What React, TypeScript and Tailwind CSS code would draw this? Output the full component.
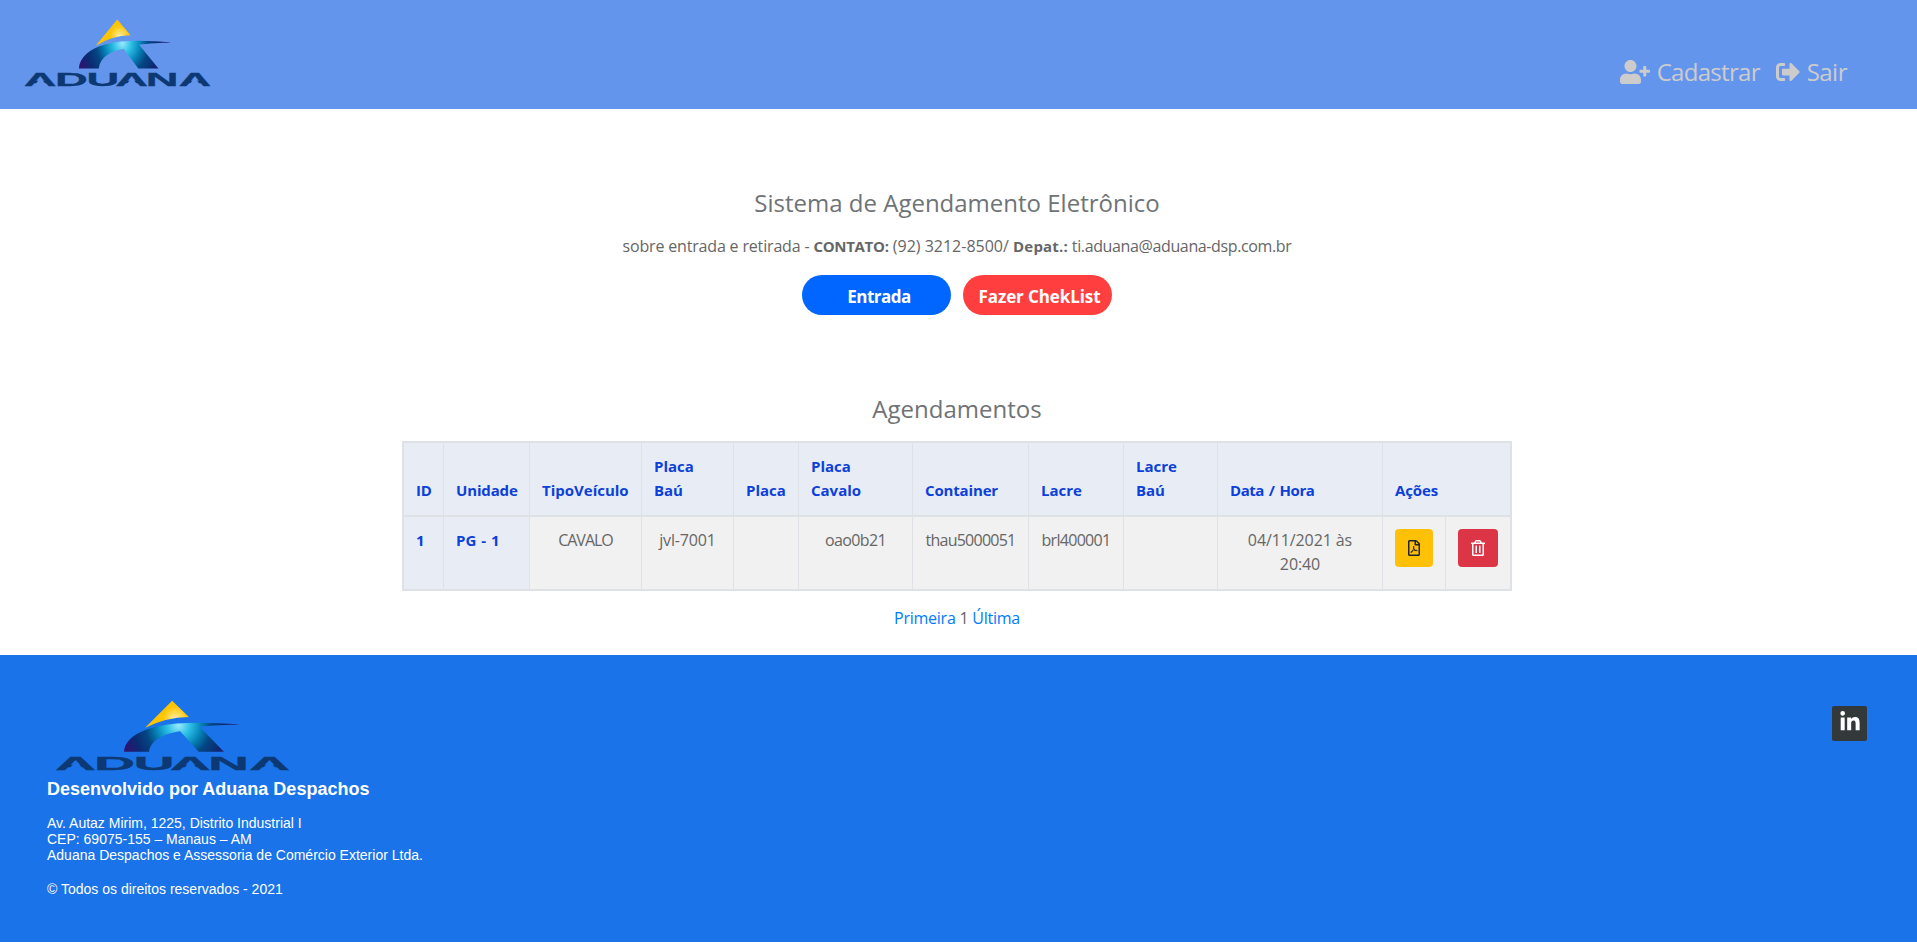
import type { ReactNode } from "react";
import { FaLinkedinIn, FaRegFilePdf, FaRegTrashAlt, FaSignOutAlt, FaUserPlus } from "react-icons/fa";

function Logo({ id, className, background }: { id: string; className: string; background: string }) {
  return (
    <svg
      className={`overflow-visible ${className}`}
      viewBox="162 177 710 220"
      preserveAspectRatio="none"
      role="img"
      aria-label="Aduana"
    >
      <defs>
        <radialGradient id={`${id}-sun`} gradientUnits="userSpaceOnUse" cx="525" cy="236" r="42">
          <stop offset="0" stopColor="#fff0b8" />
          <stop offset="0.4" stopColor="#ffdb58" />
          <stop offset="0.9" stopColor="#ffc400" />
        </radialGradient>
        <radialGradient id={`${id}-arch`} gradientUnits="userSpaceOnUse" cx="535" cy="256" r="170">
          <stop offset="0" stopColor="#9be8fb" />
          <stop offset="0.2" stopColor="#2cc0e6" />
          <stop offset="0.4" stopColor="#0683b8" />
          <stop offset="0.58" stopColor="#044683" />
          <stop offset="0.8" stopColor="#0b2a72" />
          <stop offset="1" stopColor="#2c1470" />
        </radialGradient>
      </defs>
      <path d="M516 182 L566 231 Q495 232 435 264 Z" fill={`url(#${id}-sun)`} />
      <path
        d="M372 336 C374 300 412 274 470 260 C540 244 630 248 719 254 C680 255 630 257 598 261 L671 336 L595 336 L540 274 C485 282 450 304 447 336 Z"
        fill={`url(#${id}-arch)`}
      />
      <text
        transform="scale(2.94 1)"
        x="56.2 96 136.1 173.1 212.1 253.8"
        y="391"
        fill="#0c3873"
        stroke="#0c3873"
        strokeWidth="0.8"
        className="font-['Liberation_Sans',Arial,sans-serif] text-[58px] font-bold"
      >
        ADUANA
      </text>
      <path d="M201 394 L228 364 L255 394 Z M544 394 L571 364 L598 394 Z M780 394 L807 364 L834 394 Z" fill={background} />
    </svg>
  );
}

function HeadCell({ children, className = "", span }: { children: ReactNode; className?: string; span?: number }) {
  return (
    <th
      colSpan={span}
      className={`h-[74px] border-b-2 border-[#dee2e6] bg-[#e8edf5] px-3 pb-[13px] text-left align-bottom text-[15px] font-bold text-[#0d3fdb] ${className}`}
    >
      {children}
    </th>
  );
}

function Cell({ children, className = "" }: { children?: ReactNode; className?: string }) {
  return <td className={`h-[72px] border-r border-[#dee2e6] bg-[#f1f1f1] pt-[11px] text-center align-top ${className}`}>{children}</td>;
}

export default function App() {
  return (
    <div className="flex min-h-[949px] flex-col bg-white font-['Open_Sans','Noto_Sans',sans-serif] text-base leading-6 text-[#666]">
      <header className="flex h-[109px] items-start justify-between bg-[#6495ed] pr-[70px] pl-[23px]">
        <Logo id="top" className="mt-[18px] h-[70px] w-[189px]" background="#6495ed" />
        <nav className="mt-[57px] flex text-2xl leading-[30px] text-[#ccc]">
          <a href="#" className="flex w-[156px] items-center gap-[7px]">
            <FaUserPlus className="h-6 w-[30px]" />
            <span className="font-[450] tracking-[-0.7px]">Cadastrar</span>
          </a>
          <a href="#" className="flex items-center gap-[7px]">
            <FaSignOutAlt className="size-6" />
            <span className="font-[450] tracking-[-0.5px]">Sair</span>
          </a>
        </nav>
      </header>

      <main className="flex flex-1 flex-col items-center pr-[3px]">
        <h1 className="mt-[79px] text-2xl leading-[30px] text-[#6f7376]">Sistema de Agendamento Eletrônico</h1>
        <p className="mt-4 whitespace-pre">
          <span className="tracking-[-0.17px]">sobre entrada e retirada - </span>
          <b className="text-[15px] font-bold tracking-[-0.3px]">CONTATO:</b>
          <span> (92) 3212-8500/ </span>
          <b className="text-[15px] font-bold tracking-[0.2px]">Depat.:</b>
          <span className="tracking-[-0.37px]"> ti.aduana@aduana-dsp.com.br</span>
        </p>
        <div className="mt-[17px] flex gap-3 text-[17px] font-bold text-white">
          <button className="h-10 w-[149px] rounded-full bg-[#0066ff] pt-1 pl-[5px] leading-9 tracking-[-0.5px]">Entrada</button>
          <button className="h-10 w-[149px] rounded-full bg-[#ff3f3f] pt-1 pl-[4px] leading-9 tracking-[-0.1px]">Fazer ChekList</button>
        </div>

        <h2 className="mt-[79px] text-2xl leading-[30px] text-[#6f7376]">Agendamentos</h2>
        <table className="mt-[17px] w-[1110px] table-fixed border-separate border-spacing-0 border-2 border-[#dee2e6]">
          <colgroup>
            <col className="w-[40px]" />
            <col className="w-[86px]" />
            <col className="w-[112px]" />
            <col className="w-[92px]" />
            <col className="w-[65px]" />
            <col className="w-[114px]" />
            <col className="w-[116px]" />
            <col className="w-[95px]" />
            <col className="w-[94px]" />
            <col className="w-[165px]" />
            <col className="w-[63px]" />
            <col className="w-[64px]" />
          </colgroup>
          <thead>
            <tr>
              <HeadCell className="border-r tracking-[-0.3px]">ID</HeadCell>
              <HeadCell className="border-r tracking-[-0.15px]">Unidade</HeadCell>
              <HeadCell className="border-r">TipoVeículo</HeadCell>
              <HeadCell className="border-r">Placa<br />Baú</HeadCell>
              <HeadCell className="border-r">Placa</HeadCell>
              <HeadCell className="border-r">Placa<br />Cavalo</HeadCell>
              <HeadCell className="border-r tracking-[-0.15px]">Container</HeadCell>
              <HeadCell className="border-r">Lacre</HeadCell>
              <HeadCell className="border-r">Lacre<br />Baú</HeadCell>
              <HeadCell className="border-r tracking-[-0.45px] [word-spacing:1.5px]">Data / Hora</HeadCell>
              <HeadCell span={2} className="tracking-[-0.1px]">Ações</HeadCell>
            </tr>
          </thead>
          <tbody>
            <tr>
              <th className="border-r border-[#dee2e6] bg-[#e8edf5] px-3 pt-[11px] text-left align-top text-[15px] font-bold text-[#0d3fdb]">1</th>
              <th className="border-r border-[#dee2e6] bg-[#e8edf5] px-3 pt-[11px] text-left align-top text-[15px] font-bold text-[#0d3fdb] [word-spacing:1px]">PG - 1</th>
              <Cell className="tracking-[-1px]">CAVALO</Cell>
              <Cell className="tracking-[-0.15px]">jvl-7001</Cell>
              <Cell />
              <Cell className="tracking-[-0.6px]">oao0b21</Cell>
              <Cell className="tracking-[-0.75px]">thau5000051</Cell>
              <Cell className="tracking-[-0.7px]">brl400001</Cell>
              <Cell />
              <Cell className="tracking-[-0.1px]">04/11/2021 às<br />20:40</Cell>
              <Cell>
                <button className="mt-px ml-3 flex h-[38px] w-[38px] items-center justify-center rounded bg-[#ffc107] pb-px text-[#212529]">
                  <FaRegFilePdf className="h-4 w-3" />
                </button>
              </Cell>
              <Cell className="border-r-0">
                <button className="mt-px ml-3 flex h-[38px] w-10 items-center justify-center rounded bg-[#dc3545] pb-px text-white">
                  <FaRegTrashAlt className="h-4 w-3.5" />
                </button>
              </Cell>
            </tr>
          </tbody>
        </table>
        <p className="mt-[15px] tracking-[-0.25px]">
          <a href="#" className="text-[#007bff]">Primeira</a> 1 <a href="#" className="text-[#007bff]">Última</a>
        </p>
      </main>

      <footer className="mb-[7px] flex h-[287px] justify-between bg-[#1a73e8] pr-[50px] pl-[47px] font-['Liberation_Sans',Arial,sans-serif] text-white">
        <div>
          <Logo id="bottom" className="mt-11 ml-[7px] h-[73px] w-[237px]" background="#1a73e8" />
          <h3 className="mt-[7px] text-lg leading-5 font-bold">Desenvolvido por Aduana Despachos</h3>
          <p className="mt-4 text-sm leading-4">
            Av. Autaz Mirim, 1225, Distrito Industrial I<br />
            CEP: 69075-155 – Manaus – AM<br />
            Aduana Despachos e Assessoria de Comércio Exterior Ltda.
          </p>
          <p className="mt-[18px] text-sm leading-4">© Todos os direitos reservados - 2021</p>
        </div>
        <a href="#" aria-label="LinkedIn" className="mt-[51px] flex size-[35px] justify-center rounded-xs bg-[#33383b] pt-[5px]">
          <FaLinkedinIn className="size-[22px]" />
        </a>
      </footer>
    </div>
  );
}
